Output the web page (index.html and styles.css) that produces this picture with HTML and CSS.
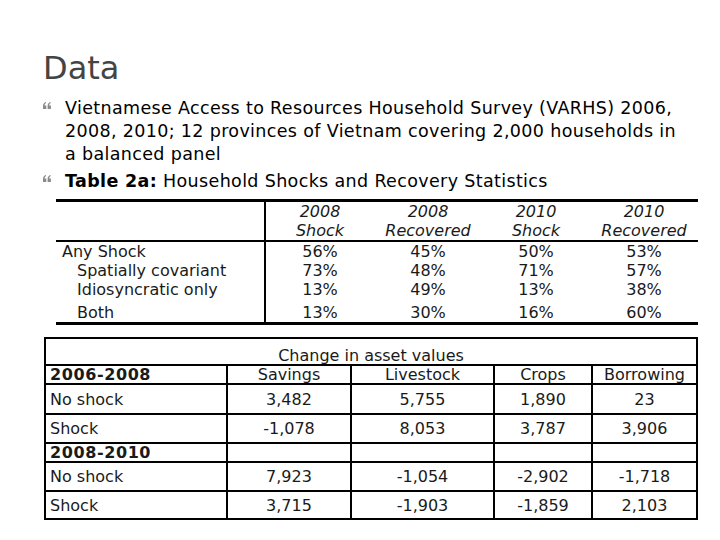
FILE: index.html
```html
<!DOCTYPE html>
<html>
<head>
    <title>Data</title>
    <link rel="stylesheet" href="styles.css">
</head>
<body>
    <div class="slide">
        <h1 class="title">Data</h1>

        <ul class="points">
            <li>
                <svg class="bullet" width="8" height="7" viewBox="0 0 8 7"><path d="M0 7V4C0 2 1 0.5 3 0V1.3C2 1.7 1.6 2.4 1.6 3.4H3.3V7ZM4.6 7V4C4.6 2 5.6 0.5 7.6 0V1.3C6.6 1.7 6.2 2.4 6.2 3.4H7.9V7Z" fill="#8a8a8a"/></svg>
                Vietnamese Access to Resources Household Survey (VARHS) 2006, 2008, 2010; 12 provinces of Vietnam covering 2,000 households in a balanced panel
            </li>
            <li>
                <svg class="bullet" width="8" height="7" viewBox="0 0 8 7"><path d="M0 7V4C0 2 1 0.5 3 0V1.3C2 1.7 1.6 2.4 1.6 3.4H3.3V7ZM4.6 7V4C4.6 2 5.6 0.5 7.6 0V1.3C6.6 1.7 6.2 2.4 6.2 3.4H7.9V7Z" fill="#8a8a8a"/></svg>
                <b>Table 2a:</b> Household Shocks and Recovery Statistics
            </li>
        </ul>

        <table class="shocks">
            <thead>
                <tr>
                    <th class="label"></th>
                    <th>2008<br>Shock</th>
                    <th>2008<br>Recovered</th>
                    <th>2010<br>Shock</th>
                    <th>2010<br>Recovered</th>
                </tr>
            </thead>
            <tbody>
                <tr>
                    <td class="label">Any Shock</td>
                    <td>56%</td><td>45%</td><td>50%</td><td>53%</td>
                </tr>
                <tr>
                    <td class="label sub">Spatially covariant</td>
                    <td>73%</td><td>48%</td><td>71%</td><td>57%</td>
                </tr>
                <tr>
                    <td class="label sub">Idiosyncratic only</td>
                    <td>13%</td><td>49%</td><td>13%</td><td>38%</td>
                </tr>
                <tr class="last">
                    <td class="label sub">Both</td>
                    <td>13%</td><td>30%</td><td>16%</td><td>60%</td>
                </tr>
            </tbody>
        </table>

        <table class="assets">
            <tr class="caption-row">
                <td colspan="5">Change in asset values</td>
            </tr>
            <tr class="head-row">
                <td class="label"><b>2006-2008</b></td>
                <td>Savings</td><td>Livestock</td><td>Crops</td><td>Borrowing</td>
            </tr>
            <tr class="tall first">
                <td class="label">No shock</td>
                <td>3,482</td><td>5,755</td><td>1,890</td><td>23</td>
            </tr>
            <tr class="tall">
                <td class="label">Shock</td>
                <td>-1,078</td><td>8,053</td><td>3,787</td><td>3,906</td>
            </tr>
            <tr class="head-row">
                <td class="label"><b>2008-2010</b></td>
                <td></td><td></td><td></td><td></td>
            </tr>
            <tr class="tall">
                <td class="label">No shock</td>
                <td>7,923</td><td>-1,054</td><td>-2,902</td><td>-1,718</td>
            </tr>
            <tr class="tall end">
                <td class="label">Shock</td>
                <td>3,715</td><td>-1,903</td><td>-1,859</td><td>2,103</td>
            </tr>
        </table>
    </div>
</body>
</html>
```

FILE: styles.css
```css
body {
    margin: 0;
    padding: 0;
    background-color: #fff;
    font-family: "DejaVu Sans", Verdana, sans-serif;
    color: #000;
}
.slide {
    width: 720px;
    height: 540px;
    padding: 46px 0 0 0;
    box-sizing: border-box;
}
.title {
    margin: 0 0 0 43px;
    font-size: 32px;
    font-weight: normal;
    line-height: 44px;
    color: #444;
}
.points {
    list-style: none;
    margin: 7px 0 0 0;
    padding: 0 35px 0 65px;
    font-size: 17.5px;
    letter-spacing: 0.35px;
    line-height: 23px;
}
.points li {
    position: relative;
    margin-bottom: 4px;
}
.bullet {
    position: absolute;
    left: -22px;
    top: 5px;
}
.shocks {
    border-collapse: collapse;
    margin: 6px 0 0 56px;
    width: 642px;
    font-size: 16px;
    line-height: 19px;
    color: #1a1a1a;
}
.shocks th {
    font-weight: normal;
    font-style: italic;
    width: 108px;
    padding: 0;
    text-align: center;
    border-top: 3px solid #000;
    border-bottom: 2px solid #000;
}
.shocks th.label {
    width: auto;
}
.shocks td {
    padding: 0;
    text-align: center;
}
.shocks .label {
    text-align: left;
    padding-left: 6px;
    border-right: 2px solid #000;
}
.shocks .sub {
    padding-left: 21px;
}
.shocks .last td {
    padding-top: 4px;
    border-bottom: 3px solid #000;
}
.assets {
    border-collapse: collapse;
    margin: 12px 0 0 44px;
    width: 654px;
    font-size: 16px;
    color: #1a1a1a;
}
.assets td {
    border: 2px solid #000;
    padding: 0;
    text-align: center;
    line-height: 17px;
}
.assets td:nth-child(1) { width: 176px; }
.assets td:nth-child(2) { width: 122px; }
.assets td:nth-child(3) { width: 141px; }
.assets td:nth-child(4) { width: 96px; }
.assets .label {
    text-align: left;
    padding-left: 4px;
}
.assets .caption-row td {
    height: 25px;
    text-align: center;
    vertical-align: bottom;
}
.assets .head-row td {
    height: 16px;
}
.assets .tall td {
    height: 27px;
}
.assets .first td {
    height: 28px;
}
.assets .end td {
    height: 26px;
}
.assets b {
    font-weight: bold;
    letter-spacing: 0.6px;
}
```
